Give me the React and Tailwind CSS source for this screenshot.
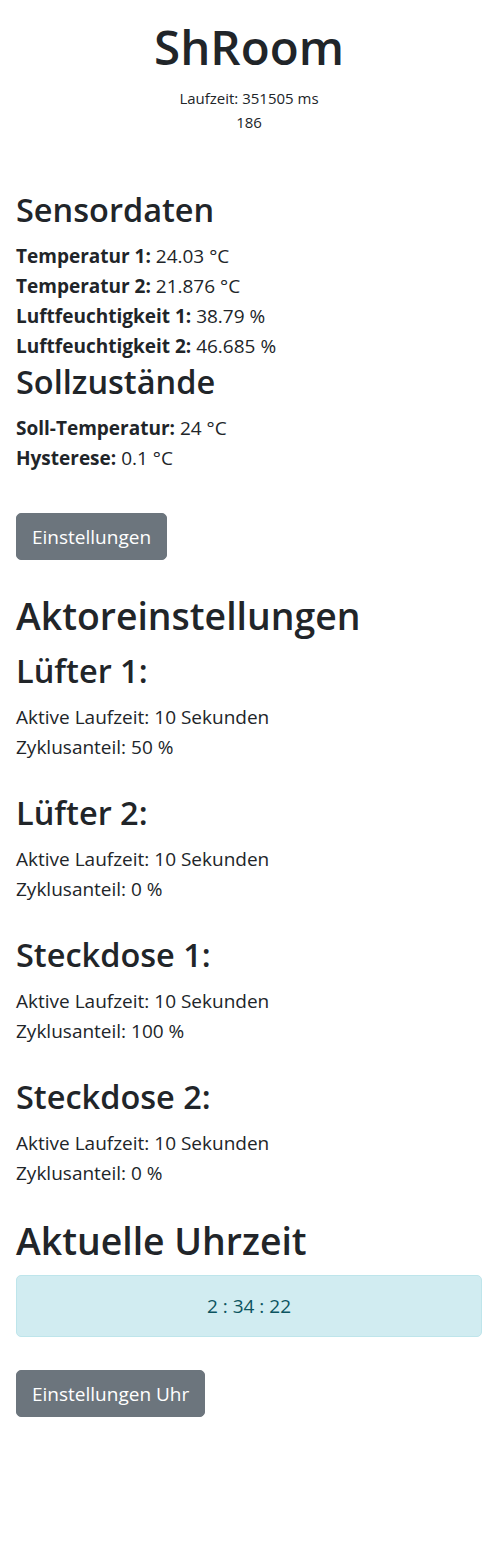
import React from 'react'

const sensors = [
    { label: "Temperatur 1:", value: "24.03 °C" },
    { label: "Temperatur 2:", value: "21.876 °C" },
    { label: "Luftfeuchtigkeit 1:", value: "38.79 %" },
    { label: "Luftfeuchtigkeit 2:", value: "46.685 %" },
]

const actors = [
    { name: "Lüfter 1:", runtime: 10, share: 50 },
    { name: "Lüfter 2:", runtime: 10, share: 0 },
    { name: "Steckdose 1:", runtime: 10, share: 100 },
    { name: "Steckdose 2:", runtime: 10, share: 0 },
]

const Button = ({ children, className = "" }) => (
    <button className={`h-[47px] px-[15px] rounded-[5px] bg-[#6c757d] border border-[#6c757d] text-white text-[19px] leading-[30px] ${className}`}>
        {children}
    </button>
)

const App = () => {
    return (
        <div className="min-h-[1543px] bg-white px-4 text-[#212529] text-[19px] leading-[30px]" style={{ fontFamily: '"Open Sans", "Noto Sans", sans-serif' }}>
            {/* Header */}
            <div className="pt-[17px] text-center">
                <h1 className="text-[47.5px] leading-[60px] font-semibold mb-[9px]">ShRoom</h1>
                <p className="text-[15px] leading-[24px]">Laufzeit: 351505 ms</p>
                <p className="text-[15px] leading-[24px]">186</p>
            </div>

            {/* Sensoren */}
            <h3 className="mt-[55px] text-[32.5px] leading-[42px] font-semibold mb-[10px]">Sensordaten</h3>
            {sensors.map((s) => (
                <p key={s.label}>
                    <b className="font-bold">{s.label}</b> {s.value}
                </p>
            ))}

            <h3 className="text-[32.5px] leading-[42px] font-semibold mb-[10px]">Sollzustände</h3>
            <p><b className="font-bold">Soll-Temperatur:</b> 24 °C</p>
            <p><b className="font-bold">Hysterese:</b> 0.1 °C</p>

            <Button className="mt-[40px]">Einstellungen</Button>

            {/* Aktoren */}
            <h2 className="mt-[32px] text-[37.4px] leading-[48px] font-semibold mb-[10px]">Aktoreinstellungen</h2>
            <div className="flex flex-col gap-[30px]">
                {actors.map((a) => (
                    <div key={a.name}>
                        <h3 className="text-[32.5px] leading-[42px] font-semibold mb-[10px]">{a.name}</h3>
                        <p>Aktive Laufzeit: {a.runtime} Sekunden</p>
                        <p>Zyklusanteil: {a.share} %</p>
                    </div>
                ))}
            </div>

            {/* Uhrzeit */}
            <h2 className="mt-[29px] text-[37.4px] leading-[48px] font-semibold mb-[10px]">Aktuelle Uhrzeit</h2>
            <div className="h-[62px] rounded-[5px] border border-[#bee5eb] bg-[#d1ecf1] text-[#0c5460] flex items-center justify-center">
                2 : 34 : 22
            </div>

            <Button className="mt-[33px]">Einstellungen Uhr</Button>
        </div>
    )
}

export default App
